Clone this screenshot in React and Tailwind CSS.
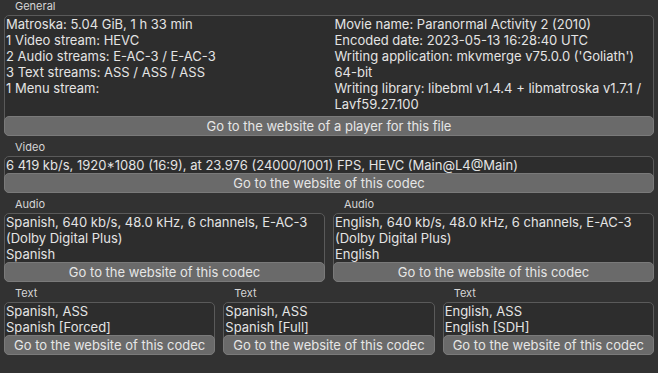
import React from "react";

const font = { fontFamily: "Inter, 'Noto Sans', sans-serif" };

function Label({ children }) {
  return <div className="h-[13px] mb-[2px] pl-[11px] text-[11px] leading-[13px] text-[#d6d6d6]">{children}</div>;
}

function GoButton({ children }) {
  return (
    <button className="mx-[-1px] mb-[-1px] h-[20px] rounded-[5px] border border-[#7a7a7a] bg-[#6a6a6a] text-[13px] leading-[18px] text-[#e6e6e6] text-center">
      {children}
    </button>
  );
}

function Box({ lines, minLines, button }) {
  return (
    <div className="flex flex-col rounded-[5px] border border-[#5a5a5a] bg-[#2d2d2d]">
      <div className="pl-[1px] text-[13px] leading-[16px] text-[#e4e4e4]" style={{ minHeight: minLines * 16 }}>
        {lines.map((l, i) => (
          <div key={i} className="whitespace-nowrap">{l}</div>
        ))}
      </div>
      <GoButton>{button}</GoButton>
    </div>
  );
}

export default function App() {
  const codec = "Go to the website of this codec";
  return (
    <div className="min-h-screen w-[658px] bg-[#323232] px-[4px] overflow-hidden" style={font}>
      {/* General */}
      <Label>General</Label>
      <div className="flex flex-col rounded-[5px] border border-[#5a5a5a] bg-[#2d2d2d]">
        <div className="grid grid-cols-2 h-[100px] pl-[1px] text-[13px] leading-[16px] text-[#e4e4e4]">
          <div>
            <div>Matroska: 5.04 GiB, 1 h 33 min</div>
            <div>1 Video stream: HEVC</div>
            <div>2 Audio streams: E-AC-3 / E-AC-3</div>
            <div>3 Text streams: ASS / ASS / ASS</div>
            <div>1 Menu stream:</div>
          </div>
          <div className="pl-[5px]">
            <div>Movie name: Paranormal Activity 2 (2010)</div>
            <div>Encoded date: 2023-05-13 16:28:40 UTC</div>
            <div>Writing application: mkvmerge v75.0.0 ('Goliath')</div>
            <div>64-bit</div>
            <div>Writing library: libebml v1.4.4 + libmatroska v1.7.1 /</div>
            <div>Lavf59.27.100</div>
          </div>
        </div>
        <GoButton>Go to the website of a player for this file</GoButton>
      </div>

      {/* Video */}
      <div className="mt-[5px]">
        <Label>Video</Label>
        <Box
          lines={["6 419 kb/s, 1920*1080 (16:9), at 23.976 (24000/1001) FPS, HEVC (Main@L4@Main)"]}
          minLines={1}
          button={codec}
        />
      </div>

      {/* Audio */}
      <div className="mt-[5px] grid grid-cols-2 gap-[8px]">
        <div>
          <Label>Audio</Label>
          <Box
            lines={["Spanish, 640 kb/s, 48.0 kHz, 6 channels, E-AC-3", "(Dolby Digital Plus)", "Spanish"]}
            minLines={3}
            button={codec}
          />
        </div>
        <div>
          <Label>Audio</Label>
          <Box
            lines={["English, 640 kb/s, 48.0 kHz, 6 channels, E-AC-3", "(Dolby Digital Plus)", "English"]}
            minLines={3}
            button={codec}
          />
        </div>
      </div>

      {/* Text */}
      <div className="mt-[5px] grid grid-cols-3 gap-[8px]">
        <div>
          <Label>Text</Label>
          <Box lines={["Spanish, ASS", "Spanish [Forced]"]} minLines={2} button={codec} />
        </div>
        <div>
          <Label>Text</Label>
          <Box lines={["Spanish, ASS", "Spanish [Full]"]} minLines={2} button={codec} />
        </div>
        <div>
          <Label>Text</Label>
          <Box lines={["English, ASS", "English [SDH]"]} minLines={2} button={codec} />
        </div>
      </div>
    </div>
  );
}
